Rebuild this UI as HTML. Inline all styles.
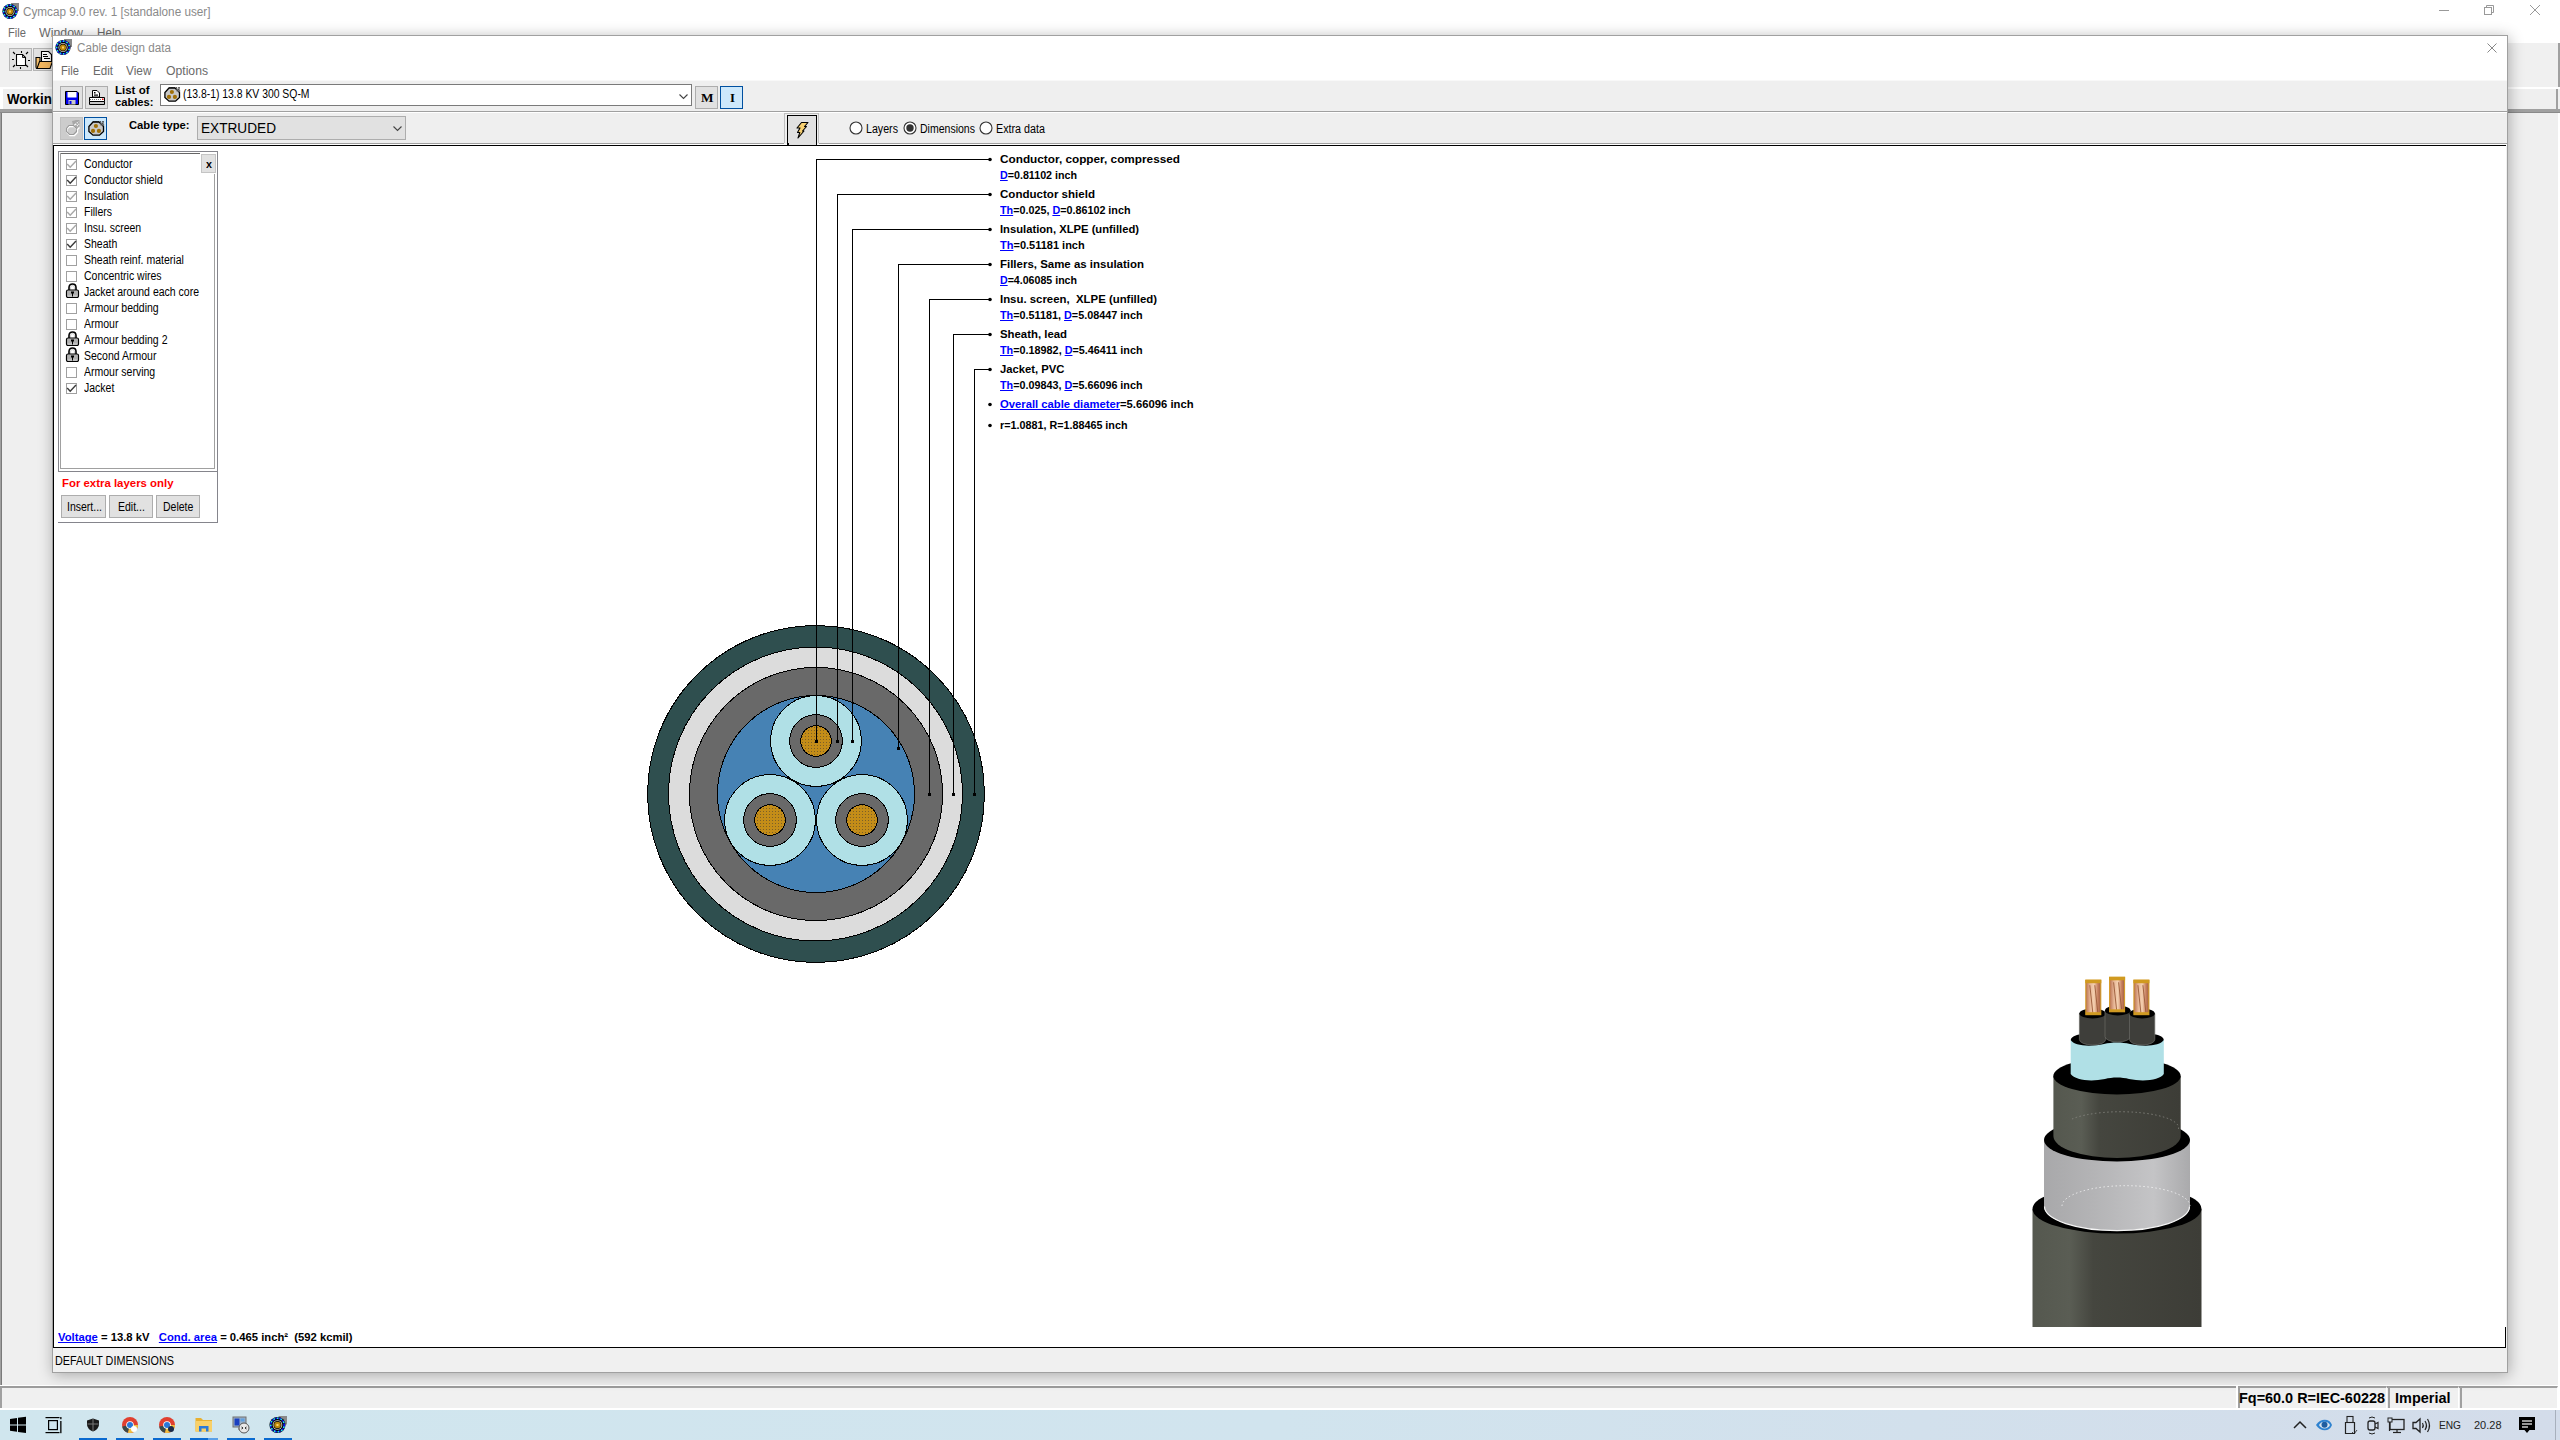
<!DOCTYPE html>
<html><head><meta charset="utf-8"><title>Cymcap</title>
<style>html,body{margin:0;padding:0;width:2560px;height:1440px;overflow:hidden;background:#f0f0f0;font-family:"Liberation Sans",sans-serif;position:relative}
u{text-decoration:underline}</style></head><body>
<div style="position:absolute;left:0px;top:0px;width:2560px;height:43px;background:#fff"></div>
<svg style="position:absolute;left:2px;top:3px" width="17" height="17" viewBox="0 0 17 17">
<rect x="9" y="0" width="8" height="8" fill="#888"/>
<circle cx="8" cy="8.5" r="7.6" fill="#000"/>
<circle cx="8" cy="8.5" r="6.4" fill="none" stroke="#1010f0" stroke-width="1.6" stroke-dasharray="2 1.5"/>
<circle cx="8" cy="8.5" r="6.4" fill="none" stroke="#20e0f0" stroke-width="1.6" stroke-dasharray="1.5 2" stroke-dashoffset="2"/>
<circle cx="8" cy="8.5" r="4.6" fill="#c8c8c8"/>
<circle cx="8" cy="8.5" r="3.7" fill="#000"/>
<circle cx="8" cy="8.5" r="3.1" fill="#b8860b"/>
<rect x="7" y="7.5" width="2" height="2" fill="#ffd060"/>
</svg>
<div style="position:absolute;left:22.8px;top:5.84px;font:normal 12px/12px 'Liberation Sans', sans-serif;color:#8a8a8a;white-space:pre;transform:scaleX(0.9771);transform-origin:0 0;">Cymcap 9.0 rev. 1 [standalone user]</div>
<svg style="position:absolute;left:2430px;top:0" width="130" height="22">
<line x1="9" y1="10.5" x2="19" y2="10.5" stroke="#999" stroke-width="1"/>
<rect x="54.5" y="7.5" width="7" height="7" fill="none" stroke="#999"/>
<path d="M56.5 7.5 V5.5 H63.5 V12.5 H61.5" fill="none" stroke="#999"/>
<line x1="100" y1="5" x2="110" y2="15" stroke="#999"/>
<line x1="110" y1="5" x2="100" y2="15" stroke="#999"/>
</svg>
<div style="position:absolute;left:7.5px;top:26.84px;font:normal 12px/12px 'Liberation Sans', sans-serif;color:#6a6a6a;white-space:pre;transform:scaleX(0.9305);transform-origin:0 0;">File</div>
<div style="position:absolute;left:39px;top:26.84px;font:normal 12px/12px 'Liberation Sans', sans-serif;color:#6a6a6a;white-space:pre;transform:scaleX(1.0307);transform-origin:0 0;">Window</div>
<div style="position:absolute;left:97px;top:26.84px;font:normal 12px/12px 'Liberation Sans', sans-serif;color:#6a6a6a;white-space:pre;transform:scaleX(0.9722);transform-origin:0 0;">Help</div>
<div style="position:absolute;left:0px;top:43px;width:2560px;height:44px;background:#f0f0f0"></div>
<div style="position:absolute;left:9px;top:48px;width:23px;height:23px;background:#e1e1e1;border:1px solid #b4b4b4;box-sizing:border-box"></div>
<svg style="position:absolute;left:9px;top:48px" width="23" height="23">
<path d="M7.5 6.5 H13.5 L16.5 9.5 V17.5 H7.5 Z" fill="#fff" stroke="#000" stroke-width="1.1"/>
<path d="M13.5 6.5 V9.5 H16.5" fill="none" stroke="#000" stroke-width="0.9"/>
<g stroke="#000" stroke-width="1.1"><line x1="12.5" y1="3" x2="12.5" y2="5"/><line x1="11.5" y1="19" x2="11.5" y2="21"/>
<line x1="3" y1="11.5" x2="5" y2="11.5"/><line x1="19" y1="12.5" x2="21" y2="12.5"/>
<line x1="4" y1="4" x2="6" y2="6"/><line x1="19" y1="4" x2="17" y2="6"/>
<line x1="4" y1="19" x2="6" y2="17"/><line x1="19" y1="19" x2="17" y2="17"/></g>
</svg>
<div style="position:absolute;left:33px;top:48px;width:23px;height:23px;background:#e1e1e1;border:1px solid #b4b4b4;box-sizing:border-box"></div>
<svg style="position:absolute;left:33px;top:48px" width="23" height="23">
<path d="M3 9.5 H7 V20.5 H4 Q3 20.5 3 19 Z" fill="#f4c070" stroke="#000" stroke-width="1.1"/>
<path d="M6.5 13.5 H19.5 L17 20.5 H4 Z" fill="#f4b860" stroke="#000" stroke-width="1.1"/>
<path d="M8.5 3.5 H15.5 L18.5 6.5 V13.5 H8.5 Z" fill="#fff" stroke="#000" stroke-width="1.1"/>
<line x1="10" y1="6.5" x2="14" y2="6.5" stroke="#000"/><line x1="10" y1="8.5" x2="15" y2="8.5" stroke="#000"/><line x1="11" y1="10.5" x2="17" y2="10.5" stroke="#000"/>
</svg>
<div style="position:absolute;left:0px;top:87px;width:2560px;height:2px;background:#fff"></div>
<div style="position:absolute;left:0px;top:89px;width:3px;height:20px;background:#fff"></div>
<div style="position:absolute;left:3px;top:89px;width:2554px;height:20px;background:#efefef"></div>
<div style="position:absolute;left:2556px;top:89px;width:2px;height:20px;background:#a0a0a0"></div>
<div style="position:absolute;left:2558px;top:43px;width:2px;height:44px;background:#a0a0a0"></div>
<div style="position:absolute;left:7px;top:92.05px;font:bold 14px/14px 'Liberation Sans', sans-serif;color:#000;white-space:pre;transform:scaleX(0.9500);transform-origin:0 0;">Working</div>
<div style="position:absolute;left:0px;top:109px;width:2560px;height:4px;background:#a0a0a0"></div>
<div style="position:absolute;left:0px;top:112px;width:2560px;height:1px;background:#8a8a8a"></div>
<div style="position:absolute;left:0px;top:113px;width:2560px;height:1272px;background:#efefef"></div>
<div style="position:absolute;left:0px;top:113px;width:2px;height:1272px;background:#a0a0a0"></div>
<div style="position:absolute;left:1px;top:113px;width:1px;height:1272px;background:#7a7a7a"></div>
<div style="position:absolute;left:2558px;top:113px;width:2px;height:1272px;background:#fff"></div>
<div style="position:absolute;left:0px;top:1385px;width:2560px;height:1px;background:#fff"></div>
<div style="position:absolute;left:0px;top:1386px;width:2560px;height:2px;background:#9c9c9c"></div>
<div style="position:absolute;left:0px;top:1388px;width:2560px;height:20px;background:#f0f0f0"></div>
<div style="position:absolute;left:0px;top:1388px;width:2px;height:20px;background:#a0a0a0"></div>
<div style="position:absolute;left:0px;top:1408px;width:2560px;height:2px;background:#fff"></div>
<div style="position:absolute;left:2558px;top:1386px;width:2px;height:24px;background:#fff"></div>
<div style="position:absolute;left:2238px;top:1386px;width:149px;height:22px;box-sizing:border-box;border-top:2px solid #a0a0a0;border-left:2px solid #a0a0a0;border-right:1px solid #fff;"></div>
<div style="position:absolute;left:2388px;top:1386px;width:71px;height:22px;box-sizing:border-box;border-top:2px solid #a0a0a0;border-left:2px solid #a0a0a0;border-right:1px solid #fff;"></div>
<div style="position:absolute;left:2460px;top:1386px;width:98px;height:22px;box-sizing:border-box;border-top:2px solid #a0a0a0;border-left:2px solid #a0a0a0;border-right:1px solid #fff;"></div>
<div style="position:absolute;left:2236px;top:1386px;width:2px;height:22px;background:#fff"></div>
<div style="position:absolute;left:2239px;top:1390.65px;font:bold 14px/14px 'Liberation Sans', sans-serif;color:#000;white-space:pre;transform:scaleX(1.0308);transform-origin:0 0;">Fq=60.0 R=IEC-60228</div>
<div style="position:absolute;left:2395px;top:1390.65px;font:bold 14px/14px 'Liberation Sans', sans-serif;color:#000;white-space:pre;transform:scaleX(1.0335);transform-origin:0 0;">Imperial</div>
<div style="position:absolute;left:0px;top:1410px;width:2560px;height:30px;background:linear-gradient(90deg,#d0e6ee 0%,#d1e4ee 50%,#d3dcea 100%)"></div>
<svg style="position:absolute;left:9px;top:1416px" width="18" height="18">
<path d="M1 3 L8 2 V8.4 H1 Z M9 1.8 L17 0.8 V8.4 H9 Z M1 9.4 H8 V15.8 L1 14.8 Z M9 9.4 H17 V17 L9 16 Z" fill="#000"/></svg>
<svg style="position:absolute;left:45px;top:1416px" width="18" height="18">
<rect x="3.6" y="4.6" width="8.8" height="9" fill="none" stroke="#000" stroke-width="1.2"/>
<rect x="0.5" y="1" width="14" height="1.2" fill="#000"/><rect x="0.5" y="16" width="14" height="1.2" fill="#000"/>
<rect x="15.2" y="1" width="1.3" height="2.2" fill="#000"/><rect x="15.2" y="5" width="1.3" height="12.2" fill="#000"/>
</svg>
<svg style="position:absolute;left:86px;top:1418px" width="14" height="14">
<path d="M7 0.5 L13 2.5 V6 C13 10 10 12.5 7 13.5 C4 12.5 1 10 1 6 V2.5 Z" fill="#1a1a1a"/>
<line x1="7" y1="1" x2="7" y2="13" stroke="#777" stroke-width="1"/><line x1="1.5" y1="6" x2="12.5" y2="6" stroke="#777" stroke-width="1"/></svg>
<svg style="position:absolute;left:121px;top:1416px" width="18" height="18">
<circle cx="9" cy="9" r="8" fill="#e04030"/>
<path d="M9 9 L1.2 10.5 A8 8 0 0 0 7 16.8 Z" fill="#3a4a48"/>
<path d="M9 9 L7 16.8 A8 8 0 0 0 17 9 L9 9 Z" fill="#f0c040"/>
<circle cx="9" cy="9" r="3.8" fill="#fff"/><circle cx="9" cy="9" r="3" fill="#2a78d8"/>
<circle cx="13" cy="13" r="3" fill="#fff"/></svg>
<svg style="position:absolute;left:158px;top:1416px" width="18" height="18">
<circle cx="9" cy="9" r="8" fill="#e04030"/>
<path d="M9 9 L1.2 10.5 A8 8 0 0 0 7 16.8 Z" fill="#3a4a48"/>
<path d="M9 9 L7 16.8 A8 8 0 0 0 17 9 L9 9 Z" fill="#f0c040"/>
<circle cx="9" cy="9" r="3.8" fill="#fff"/><circle cx="9" cy="9" r="3" fill="#2a78d8"/>
<circle cx="13" cy="13" r="3" fill="#1a2a4a"/></svg>
<svg style="position:absolute;left:195px;top:1417px" width="18" height="16">
<path d="M0.5 1 H6 L8 3 H17 V14.5 H0.5 Z" fill="#e8b030"/>
<rect x="0.5" y="4" width="16.5" height="10.5" fill="#f8d068"/>
<path d="M4 14.5 V9 H13.5 V14.5 H11 V11.5 H6.5 V14.5 Z" fill="#2a7ad8"/></svg>
<svg style="position:absolute;left:232px;top:1416px" width="18" height="18">
<rect x="1" y="1" width="13" height="10" fill="#9ab0c8" stroke="#707070"/>
<rect x="2.5" y="2.5" width="5" height="7" fill="#1a40c0"/><rect x="8.5" y="2.5" width="4" height="3" fill="#60a0e0"/>
<rect x="6" y="11" width="4" height="3" fill="#aaa"/>
<circle cx="12" cy="12" r="5" fill="#e8e8e8" stroke="#555"/>
<path d="M9.5 11 L11 12 L9.5 13 M14.5 11 L13 12 L14.5 13" stroke="#222" fill="none"/></svg>
<svg style="position:absolute;left:269px;top:1416px" width="18" height="18" viewBox="0 0 17 17">
<rect x="9" y="0" width="8" height="8" fill="#888"/>
<circle cx="8" cy="8.5" r="7.6" fill="#000"/>
<circle cx="8" cy="8.5" r="6.4" fill="none" stroke="#1010f0" stroke-width="1.6" stroke-dasharray="2 1.5"/>
<circle cx="8" cy="8.5" r="6.4" fill="none" stroke="#20e0f0" stroke-width="1.6" stroke-dasharray="1.5 2" stroke-dashoffset="2"/>
<circle cx="8" cy="8.5" r="4.6" fill="#c8c8c8"/>
<circle cx="8" cy="8.5" r="3.7" fill="#000"/>
<circle cx="8" cy="8.5" r="3.1" fill="#b8860b"/>
<rect x="7" y="7.5" width="2" height="2" fill="#ffd060"/>
</svg>
<div style="position:absolute;left:79px;top:1438px;width:28px;height:2px;background:#0a6ad0"></div>
<div style="position:absolute;left:116px;top:1438px;width:28px;height:2px;background:#0a6ad0"></div>
<div style="position:absolute;left:153px;top:1438px;width:28px;height:2px;background:#0a6ad0"></div>
<div style="position:absolute;left:190px;top:1438px;width:28px;height:2px;background:#0a6ad0"></div>
<div style="position:absolute;left:227px;top:1438px;width:28px;height:2px;background:#0a6ad0"></div>
<div style="position:absolute;left:264px;top:1438px;width:28px;height:2px;background:#0a6ad0"></div>
<div style="position:absolute;left:208px;top:1438px;width:10px;height:2px;background:#5aa0e8"></div>
<svg style="position:absolute;left:2290px;top:1414px" width="270" height="24">
<path d="M4 14 L10 8 L16 14" fill="none" stroke="#222" stroke-width="1.5"/>
<path d="M26 11 C30 4 40 4 42 11 C40 18 30 18 26 11 Z" fill="#2e82d0"/>
<path d="M29 11 C31 6.5 38 6.5 40 11 C38 15.5 31 15.5 29 11 Z" fill="#d9e4ee"/>
<circle cx="34.5" cy="10.8" r="3" fill="#1f5da0"/>
<rect x="57" y="2.5" width="6" height="6" fill="none" stroke="#222" stroke-width="1.1"/>
<path d="M55.5 8.5 H64.5 V19.5 H55.5 Z" fill="none" stroke="#222" stroke-width="1.2"/>
<path d="M62 18 L64 20 L67 16" fill="none" stroke="#222" stroke-width="0.8"/>
<rect x="78" y="7" width="7" height="9" rx="2" fill="none" stroke="#222" stroke-width="1.3"/>
<path d="M85 10 L88 8.5 V14.5 L85 13" fill="none" stroke="#222" stroke-width="1.2"/>
<path d="M79 4 Q82 2 85 4 M79 19 Q82 21 85 19" fill="none" stroke="#222" stroke-width="1"/>
<rect x="100" y="5.5" width="14" height="10" fill="none" stroke="#222" stroke-width="1.3"/>
<rect x="98" y="4" width="4" height="4" fill="#d5e0ec" stroke="#222" stroke-width="1"/>
<line x1="99.5" y1="8" x2="99.5" y2="17" stroke="#222" stroke-width="1.2"/>
<line x1="107" y1="15.5" x2="107" y2="18.5" stroke="#222" stroke-width="1.2"/><line x1="103" y1="18.5" x2="111" y2="18.5" stroke="#222" stroke-width="1.2"/>
<path d="M123 8.5 H126 L130 5 V18 L126 14.5 H123 Z" fill="none" stroke="#222" stroke-width="1.3"/>
<path d="M132.5 9 Q134 11.5 132.5 14 M135 7 Q138 11.5 135 16 M137.5 5 Q141.5 11.5 137.5 18" fill="none" stroke="#222" stroke-width="1.2"/>
<path d="M229 3 H245 V16 H239.5 L237 19 L234.5 16 H229 Z" fill="#000"/>
<line x1="232" y1="7" x2="242" y2="7" stroke="#fff" stroke-width="1.2"/><line x1="232" y1="10" x2="242" y2="10" stroke="#fff" stroke-width="1.2"/><line x1="232" y1="13" x2="238" y2="13" stroke="#fff" stroke-width="1.2"/>
</svg>
<div style="position:absolute;left:2438.5px;top:1419.57px;font:normal 11.5px/11.5px 'Liberation Sans', sans-serif;color:#222;white-space:pre;transform:scaleX(0.8828);transform-origin:0 0;">ENG</div>
<div style="position:absolute;left:2473.5px;top:1419.57px;font:normal 11.5px/11.5px 'Liberation Sans', sans-serif;color:#222;white-space:pre;transform:scaleX(0.9555);transform-origin:0 0;">20.28</div>
<div style="position:absolute;left:2555px;top:1410px;width:1px;height:30px;background:#a8b0bc"></div>
<div style="position:absolute;left:52px;top:35px;width:2456px;height:1338px;box-sizing:border-box;border:1px solid #a0a0a0;background:#f0f0f0;box-shadow:1px 2px 14px rgba(0,0,0,0.30)"></div>
<div style="position:absolute;left:53px;top:36px;width:2454px;height:45px;background:#fff"></div>
<svg style="position:absolute;left:55px;top:39px" width="17" height="17" viewBox="0 0 17 17">
<rect x="9" y="0" width="8" height="8" fill="#888"/>
<circle cx="8" cy="8.5" r="7.6" fill="#000"/>
<circle cx="8" cy="8.5" r="6.4" fill="none" stroke="#1010f0" stroke-width="1.6" stroke-dasharray="2 1.5"/>
<circle cx="8" cy="8.5" r="6.4" fill="none" stroke="#20e0f0" stroke-width="1.6" stroke-dasharray="1.5 2" stroke-dashoffset="2"/>
<circle cx="8" cy="8.5" r="4.6" fill="#c8c8c8"/>
<circle cx="8" cy="8.5" r="3.7" fill="#000"/>
<circle cx="8" cy="8.5" r="3.1" fill="#b8860b"/>
<rect x="7" y="7.5" width="2" height="2" fill="#ffd060"/>
</svg>
<div style="position:absolute;left:77px;top:41.84px;font:normal 12px/12px 'Liberation Sans', sans-serif;color:#8a8a8a;white-space:pre;transform:scaleX(0.9716);transform-origin:0 0;">Cable design data</div>
<svg style="position:absolute;left:2480px;top:38px" width="24" height="20">
<line x1="7.5" y1="5.5" x2="16.5" y2="14.5" stroke="#888" stroke-width="1"/>
<line x1="16.5" y1="5.5" x2="7.5" y2="14.5" stroke="#888" stroke-width="1"/></svg>
<div style="position:absolute;left:60.5px;top:64.84px;font:normal 12px/12px 'Liberation Sans', sans-serif;color:#6a6a6a;white-space:pre;transform:scaleX(0.9305);transform-origin:0 0;">File</div>
<div style="position:absolute;left:92.5px;top:64.84px;font:normal 12px/12px 'Liberation Sans', sans-serif;color:#6a6a6a;white-space:pre;transform:scaleX(0.9668);transform-origin:0 0;">Edit</div>
<div style="position:absolute;left:126px;top:64.84px;font:normal 12px/12px 'Liberation Sans', sans-serif;color:#6a6a6a;white-space:pre;transform:scaleX(0.9885);transform-origin:0 0;">View</div>
<div style="position:absolute;left:165.5px;top:64.84px;font:normal 12px/12px 'Liberation Sans', sans-serif;color:#6a6a6a;white-space:pre;transform:scaleX(1.0155);transform-origin:0 0;">Options</div>
<div style="position:absolute;left:53px;top:80px;width:2454px;height:1px;background:#f8f8f8"></div>
<div style="position:absolute;left:53px;top:81px;width:2454px;height:30px;background:#efefef"></div>
<div style="position:absolute;left:60px;top:86px;width:23px;height:23px;box-sizing:border-box;border:1px solid #adadad;background:#e1e1e1"></div>
<svg style="position:absolute;left:60px;top:86px" width="23" height="23">
<path d="M5.5 5.5 H17 L18.5 7 V18.5 H5.5 Z" fill="#0000f0" stroke="#000"/>
<rect x="7.5" y="6" width="9" height="5.5" fill="#fff"/>
<rect x="8.5" y="14" width="7" height="4.5" fill="#c8c8c8"/><rect x="9.5" y="15" width="2" height="3" fill="#0000f0"/>
</svg>
<div style="position:absolute;left:85px;top:86px;width:23px;height:23px;box-sizing:border-box;border:1px solid #adadad;background:#e1e1e1"></div>
<svg style="position:absolute;left:85px;top:86px" width="23" height="23">
<path d="M7.5 4.5 H12 L14.5 7 V11 H7.5 Z" fill="#fff" stroke="#000"/>
<rect x="9" y="6" width="1.5" height="1.5" fill="#000"/><rect x="9" y="8.5" width="4" height="1.2" fill="#000"/>
<path d="M4.5 11.5 H19.5 V15.5 H4.5 Z" fill="#fff" stroke="#000"/>
<path d="M5 13.5 H19" stroke="#777" stroke-dasharray="1 1"/>
<rect x="17" y="12.5" width="1.5" height="1.5" fill="#e00"/>
<path d="M4.5 15.5 H19.5 V18.5 H4.5 Z" fill="#c8c8c8" stroke="#000"/>
</svg>
<div style="position:absolute;left:115.4px;top:85.09px;font:bold 11px/11px 'Liberation Sans', sans-serif;color:#000;white-space:pre;transform:scaleX(1.0455);transform-origin:0 0;">List of</div>
<div style="position:absolute;left:115.4px;top:96.99px;font:bold 11px/11px 'Liberation Sans', sans-serif;color:#000;white-space:pre;transform:scaleX(1.0152);transform-origin:0 0;">cables:</div>
<div style="position:absolute;left:160px;top:84px;width:532px;height:22px;box-sizing:border-box;border:1px solid #7a7a7a;background:#fff"></div>
<svg style="position:absolute;left:164px;top:87px" width="17" height="16" viewBox="0 0 17 16">
<path d="M5 1 H11 L15.5 5.5 V10.5 L11.5 14.2 H5 L0.9 10.5 V5.5 Z" fill="#c8c8c8" stroke="#000" stroke-width="1.3"/>
<path d="M5.5 0.8 L6.5 -0.2 L7.5 0.8 M8.5 0.8 L9.5 -0.2 L10.5 0.8" fill="none" stroke="#000" stroke-width="1"/>
<path d="M12 1.5 L13 0.5 M14.5 1 L15.5 0 M13.5 3.5 L15.5 1.5 M15 4.5 L16 3.5" stroke="#222" stroke-width="1.1"/>
<rect x="12" y="1" width="4" height="4" fill="#888" opacity="0.45"/>
<circle cx="7.9" cy="5" r="2.1" fill="#a07008"/>
<circle cx="5" cy="9.9" r="2.1" fill="#a07008"/>
<circle cx="10.9" cy="9.9" r="2.1" fill="#a07008"/>
</svg>
<div style="position:absolute;left:183.4px;top:88.14px;font:normal 12px/12px 'Liberation Sans', sans-serif;color:#000;white-space:pre;transform:scaleX(0.8660);transform-origin:0 0;">(13.8-1) 13.8 KV 300 SQ-M</div>
<svg style="position:absolute;left:679px;top:93.5px" width="9" height="6"><path d="M0.5 0.5 L4.5 4.5 L8.5 0.5" fill="none" stroke="#444" stroke-width="1.1"/></svg>
<div style="position:absolute;left:695px;top:86px;width:23px;height:23px;box-sizing:border-box;border:1px solid #adadad;background:#e1e1e1"></div>
<div style="position:absolute;left:700.6px;top:92.42px;font:bold 12.5px/12.5px 'Liberation Serif', serif;color:#000;white-space:pre;transform:scaleX(1.0582);transform-origin:0 0;">M</div>
<div style="position:absolute;left:720px;top:86px;width:23px;height:23px;box-sizing:border-box;border:1px solid #0050a0;background:#cde8fb"></div>
<div style="position:absolute;left:729.6px;top:92.42px;font:bold 12.5px/12.5px 'Liberation Serif', serif;color:#000;white-space:pre;transform:scaleX(1.0256);transform-origin:0 0;">I</div>
<div style="position:absolute;left:53px;top:111px;width:2454px;height:1px;background:#a0a0a0"></div>
<div style="position:absolute;left:53px;top:112px;width:2454px;height:1px;background:#fff"></div>
<div style="position:absolute;left:53px;top:113px;width:2454px;height:30px;background:#efefef"></div>
<div style="position:absolute;left:60px;top:117px;width:23px;height:23px;box-sizing:border-box;border:1px solid #c0c0c0;background:#cccccc"></div>
<svg style="position:absolute;left:60px;top:117px" width="23" height="23">
<path d="M12 4 L14.5 3.5 L16 3 L19.5 3 V9 L17 12 L15 10 L13 8 Z" fill="#a8a8a8"/>
<path d="M15.5 7.5 L18.5 4.5 M17 9 L19 7" stroke="#fff" stroke-width="1.2" stroke-dasharray="1 1"/>
<path d="M9.5 9.5 H14 L17.5 13 V15.5 L14.5 18.5 H10 L7 15.5 V12 Z" fill="none" stroke="#fff" stroke-width="1.3"/>
<path d="M9 8.5 H13.5 L16.5 11.5 V14.5 L13.5 17.5 H9.5 L6.5 14.5 V11.5 Z" fill="none" stroke="#9a9a9a" stroke-width="1.1"/>
<path d="M14 8 L16 7.5 M17 13 L19.5 10.5" stroke="#fff" stroke-width="1.2"/>
</svg>
<div style="position:absolute;left:84px;top:117px;width:23px;height:23px;box-sizing:border-box;border:1px solid #0050a0;background:#cde8fb"></div>
<svg style="position:absolute;left:88px;top:121px" width="17" height="16" viewBox="0 0 17 16">
<path d="M5 1 H11 L15.5 5.5 V10.5 L11.5 14.2 H5 L0.9 10.5 V5.5 Z" fill="#c8c8c8" stroke="#000" stroke-width="1.3"/>
<path d="M5.5 0.8 L6.5 -0.2 L7.5 0.8 M8.5 0.8 L9.5 -0.2 L10.5 0.8" fill="none" stroke="#000" stroke-width="1"/>
<path d="M12 1.5 L13 0.5 M14.5 1 L15.5 0 M13.5 3.5 L15.5 1.5 M15 4.5 L16 3.5" stroke="#222" stroke-width="1.1"/>
<rect x="12" y="1" width="4" height="4" fill="#888" opacity="0.45"/>
<circle cx="7.9" cy="5" r="2.1" fill="#a07008"/>
<circle cx="5" cy="9.9" r="2.1" fill="#a07008"/>
<circle cx="10.9" cy="9.9" r="2.1" fill="#a07008"/>
</svg>
<div style="position:absolute;left:129.2px;top:120.29px;font:bold 11px/11px 'Liberation Sans', sans-serif;color:#000;white-space:pre;transform:scaleX(1.0203);transform-origin:0 0;">Cable type:</div>
<div style="position:absolute;left:197px;top:116px;width:209px;height:24px;box-sizing:border-box;border:1px solid #adadad;background:#e1e1e1"></div>
<div style="position:absolute;left:200.8px;top:121.15px;font:normal 14px/14px 'Liberation Sans', sans-serif;color:#000;white-space:pre;transform:scaleX(0.9738);transform-origin:0 0;">EXTRUDED</div>
<svg style="position:absolute;left:392.5px;top:126px" width="9" height="6"><path d="M0.5 0.5 L4.5 4.5 L8.5 0.5" fill="none" stroke="#444" stroke-width="1.1"/></svg>
<div style="position:absolute;left:784px;top:113px;width:35px;height:31px;box-sizing:border-box;border:1px solid #c0c0c0;border-bottom:none;background:#efefef"></div>
<div style="position:absolute;left:787px;top:115px;width:30px;height:29px;box-sizing:border-box;border:1.5px solid #000;border-bottom:none;background:#e1e1e1"></div>
<svg style="position:absolute;left:787px;top:115px" width="30" height="29">
<path d="M14.5 7.5 H21 L17.5 11.5 H19.5 L15.5 16 H17 L11 23 L12.8 17.5 H10.5 L13 13 H10 Z" fill="#f8d070" stroke="#000" stroke-width="1.1" stroke-linejoin="round"/></svg>
<svg style="position:absolute;left:849.3px;top:121.4px" width="14" height="14"><circle cx="7" cy="7" r="6" fill="#fff" stroke="#333" stroke-width="1.1"/></svg>
<div style="position:absolute;left:865.8px;top:122.84px;font:normal 12px/12px 'Liberation Sans', sans-serif;color:#000;white-space:pre;transform:scaleX(0.8881);transform-origin:0 0;">Layers</div>
<svg style="position:absolute;left:903.4px;top:121.4px" width="14" height="14"><circle cx="7" cy="7" r="6" fill="#fff" stroke="#333" stroke-width="1.1"/><circle cx="7" cy="7" r="3.7" fill="#333"/></svg>
<div style="position:absolute;left:920.0px;top:122.84px;font:normal 12px/12px 'Liberation Sans', sans-serif;color:#000;white-space:pre;transform:scaleX(0.8771);transform-origin:0 0;">Dimensions</div>
<svg style="position:absolute;left:979.2px;top:121.4px" width="14" height="14"><circle cx="7" cy="7" r="6" fill="#fff" stroke="#333" stroke-width="1.1"/></svg>
<div style="position:absolute;left:996.0px;top:122.84px;font:normal 12px/12px 'Liberation Sans', sans-serif;color:#000;white-space:pre;transform:scaleX(0.8957);transform-origin:0 0;">Extra data</div>
<div style="position:absolute;left:53px;top:143px;width:2454px;height:1px;background:#a0a0a0"></div>
<div style="position:absolute;left:53px;top:144px;width:2454px;height:1px;background:#fff"></div>
<div style="position:absolute;left:784px;top:143px;width:35px;height:1px;background:#efefef"></div>
<div style="position:absolute;left:787px;top:143px;width:1.5px;height:2px;background:#000"></div>
<div style="position:absolute;left:815.5px;top:143px;width:1.5px;height:2px;background:#000"></div>
<div style="position:absolute;left:788.5px;top:143px;width:27px;height:2px;background:#e1e1e1"></div>
<div style="position:absolute;left:53px;top:145px;width:2453px;height:1203px;background:#fff"></div>
<div style="position:absolute;left:53px;top:145px;width:2453px;height:1px;background:#000"></div>
<div style="position:absolute;left:53px;top:145px;width:1px;height:1203px;background:#000"></div>
<div style="position:absolute;left:53px;top:1347px;width:2453px;height:1px;background:#000"></div>
<div style="position:absolute;left:2505px;top:1327px;width:1px;height:21px;background:#000"></div>
<div style="position:absolute;left:55.3px;top:1354.54px;font:normal 12px/12px 'Liberation Sans', sans-serif;color:#000;white-space:pre;transform:scaleX(0.8998);transform-origin:0 0;">DEFAULT DIMENSIONS</div>
<div style="position:absolute;left:58px;top:151px;width:160px;height:1px;background:#85858c"></div>
<div style="position:absolute;left:58px;top:151px;width:1px;height:321px;background:#85858c"></div>
<div style="position:absolute;left:217px;top:151px;width:1px;height:372px;background:#85858c"></div>
<div style="position:absolute;left:58px;top:471px;width:160px;height:1px;background:#85858c"></div>
<div style="position:absolute;left:58px;top:522px;width:160px;height:1px;background:#85858c"></div>
<div style="position:absolute;left:60px;top:153px;width:140px;height:1px;background:#666"></div>
<div style="position:absolute;left:60px;top:153px;width:1px;height:316px;background:#a0a0a0"></div>
<div style="position:absolute;left:60px;top:468px;width:155px;height:1px;background:#a0a0a0"></div>
<div style="position:absolute;left:214px;top:174px;width:1px;height:295px;background:#a0a0a0"></div>
<div style="position:absolute;left:201px;top:154px;width:15px;height:19px;box-sizing:border-box;border:1px solid #c4c4c4;background:#e1e1e1"></div>
<div style="position:absolute;left:206px;top:158.69px;font:bold 11px/11px 'Liberation Sans', sans-serif;color:#000;white-space:pre;transform:scaleX(0.9796);transform-origin:0 0;">x</div>
<div style="position:absolute;left:66px;top:159px;width:11px;height:11px;box-sizing:border-box;border:1px solid #a0a0a0;background:#fff"></div>
<svg style="position:absolute;left:66px;top:159px" width="11" height="11"><path d="M1.2 5 L4.2 8.2 L10 2" fill="none" stroke="#a8a8a8" stroke-width="1.4"/></svg>
<div style="position:absolute;left:83.8px;top:157.64px;font:normal 12px/12px 'Liberation Sans', sans-serif;color:#000;white-space:pre;transform:scaleX(0.8750);transform-origin:0 0;">Conductor</div>
<div style="position:absolute;left:66px;top:175px;width:11px;height:11px;box-sizing:border-box;border:1px solid #a0a0a0;background:#fff"></div>
<svg style="position:absolute;left:66px;top:175px" width="11" height="11"><path d="M1.2 5 L4.2 8.2 L10 2" fill="none" stroke="#3a3a3a" stroke-width="1.4"/></svg>
<div style="position:absolute;left:83.8px;top:173.64px;font:normal 12px/12px 'Liberation Sans', sans-serif;color:#000;white-space:pre;transform:scaleX(0.8750);transform-origin:0 0;">Conductor shield</div>
<div style="position:absolute;left:66px;top:191px;width:11px;height:11px;box-sizing:border-box;border:1px solid #a0a0a0;background:#fff"></div>
<svg style="position:absolute;left:66px;top:191px" width="11" height="11"><path d="M1.2 5 L4.2 8.2 L10 2" fill="none" stroke="#a8a8a8" stroke-width="1.4"/></svg>
<div style="position:absolute;left:83.8px;top:189.64px;font:normal 12px/12px 'Liberation Sans', sans-serif;color:#000;white-space:pre;transform:scaleX(0.8750);transform-origin:0 0;">Insulation</div>
<div style="position:absolute;left:66px;top:207px;width:11px;height:11px;box-sizing:border-box;border:1px solid #a0a0a0;background:#fff"></div>
<svg style="position:absolute;left:66px;top:207px" width="11" height="11"><path d="M1.2 5 L4.2 8.2 L10 2" fill="none" stroke="#a8a8a8" stroke-width="1.4"/></svg>
<div style="position:absolute;left:83.8px;top:205.64px;font:normal 12px/12px 'Liberation Sans', sans-serif;color:#000;white-space:pre;transform:scaleX(0.8750);transform-origin:0 0;">Fillers</div>
<div style="position:absolute;left:66px;top:223px;width:11px;height:11px;box-sizing:border-box;border:1px solid #a0a0a0;background:#fff"></div>
<svg style="position:absolute;left:66px;top:223px" width="11" height="11"><path d="M1.2 5 L4.2 8.2 L10 2" fill="none" stroke="#a8a8a8" stroke-width="1.4"/></svg>
<div style="position:absolute;left:83.8px;top:221.64px;font:normal 12px/12px 'Liberation Sans', sans-serif;color:#000;white-space:pre;transform:scaleX(0.8750);transform-origin:0 0;">Insu. screen</div>
<div style="position:absolute;left:66px;top:239px;width:11px;height:11px;box-sizing:border-box;border:1px solid #a0a0a0;background:#fff"></div>
<svg style="position:absolute;left:66px;top:239px" width="11" height="11"><path d="M1.2 5 L4.2 8.2 L10 2" fill="none" stroke="#3a3a3a" stroke-width="1.4"/></svg>
<div style="position:absolute;left:83.8px;top:237.64px;font:normal 12px/12px 'Liberation Sans', sans-serif;color:#000;white-space:pre;transform:scaleX(0.8750);transform-origin:0 0;">Sheath</div>
<div style="position:absolute;left:66px;top:255px;width:11px;height:11px;box-sizing:border-box;border:1px solid #a0a0a0;background:#fff"></div>
<div style="position:absolute;left:83.8px;top:253.64px;font:normal 12px/12px 'Liberation Sans', sans-serif;color:#000;white-space:pre;transform:scaleX(0.8750);transform-origin:0 0;">Sheath reinf. material</div>
<div style="position:absolute;left:66px;top:271px;width:11px;height:11px;box-sizing:border-box;border:1px solid #a0a0a0;background:#fff"></div>
<div style="position:absolute;left:83.8px;top:269.64px;font:normal 12px/12px 'Liberation Sans', sans-serif;color:#000;white-space:pre;transform:scaleX(0.8750);transform-origin:0 0;">Concentric wires</div>
<svg style="position:absolute;left:65px;top:283px" width="15" height="15">
<path d="M4 7 V4.5 C4 2 5.5 1 7.5 1 C9.5 1 11 2 11 4.5 V7" fill="none" stroke="#000" stroke-width="1.6"/>
<path d="M5.6 7 V4.8 C5.6 3.3 6.4 2.6 7.5 2.6 C8.6 2.6 9.4 3.3 9.4 4.8 V7" fill="none" stroke="#bbb" stroke-width="0.8"/>
<rect x="1.5" y="7" width="12" height="7.5" rx="1.5" fill="#c0c0c0" stroke="#000" stroke-width="1.2"/>
<path d="M2.5 9 H12.5 M2.5 11 H12.5" stroke="#888" stroke-width="0.6"/>
<path d="M6 8.5 H9 V10 L8 11 V13.5 H7 V11 L6 10 Z" fill="#000"/></svg>
<div style="position:absolute;left:83.8px;top:285.64px;font:normal 12px/12px 'Liberation Sans', sans-serif;color:#000;white-space:pre;transform:scaleX(0.8750);transform-origin:0 0;">Jacket around each core</div>
<div style="position:absolute;left:66px;top:303px;width:11px;height:11px;box-sizing:border-box;border:1px solid #a0a0a0;background:#fff"></div>
<div style="position:absolute;left:83.8px;top:301.64px;font:normal 12px/12px 'Liberation Sans', sans-serif;color:#000;white-space:pre;transform:scaleX(0.8750);transform-origin:0 0;">Armour bedding</div>
<div style="position:absolute;left:66px;top:319px;width:11px;height:11px;box-sizing:border-box;border:1px solid #a0a0a0;background:#fff"></div>
<div style="position:absolute;left:83.8px;top:317.64px;font:normal 12px/12px 'Liberation Sans', sans-serif;color:#000;white-space:pre;transform:scaleX(0.8750);transform-origin:0 0;">Armour</div>
<svg style="position:absolute;left:65px;top:331px" width="15" height="15">
<path d="M4 7 V4.5 C4 2 5.5 1 7.5 1 C9.5 1 11 2 11 4.5 V7" fill="none" stroke="#000" stroke-width="1.6"/>
<path d="M5.6 7 V4.8 C5.6 3.3 6.4 2.6 7.5 2.6 C8.6 2.6 9.4 3.3 9.4 4.8 V7" fill="none" stroke="#bbb" stroke-width="0.8"/>
<rect x="1.5" y="7" width="12" height="7.5" rx="1.5" fill="#c0c0c0" stroke="#000" stroke-width="1.2"/>
<path d="M2.5 9 H12.5 M2.5 11 H12.5" stroke="#888" stroke-width="0.6"/>
<path d="M6 8.5 H9 V10 L8 11 V13.5 H7 V11 L6 10 Z" fill="#000"/></svg>
<div style="position:absolute;left:83.8px;top:333.64px;font:normal 12px/12px 'Liberation Sans', sans-serif;color:#000;white-space:pre;transform:scaleX(0.8750);transform-origin:0 0;">Armour bedding 2</div>
<svg style="position:absolute;left:65px;top:347px" width="15" height="15">
<path d="M4 7 V4.5 C4 2 5.5 1 7.5 1 C9.5 1 11 2 11 4.5 V7" fill="none" stroke="#000" stroke-width="1.6"/>
<path d="M5.6 7 V4.8 C5.6 3.3 6.4 2.6 7.5 2.6 C8.6 2.6 9.4 3.3 9.4 4.8 V7" fill="none" stroke="#bbb" stroke-width="0.8"/>
<rect x="1.5" y="7" width="12" height="7.5" rx="1.5" fill="#c0c0c0" stroke="#000" stroke-width="1.2"/>
<path d="M2.5 9 H12.5 M2.5 11 H12.5" stroke="#888" stroke-width="0.6"/>
<path d="M6 8.5 H9 V10 L8 11 V13.5 H7 V11 L6 10 Z" fill="#000"/></svg>
<div style="position:absolute;left:83.8px;top:349.64px;font:normal 12px/12px 'Liberation Sans', sans-serif;color:#000;white-space:pre;transform:scaleX(0.8750);transform-origin:0 0;">Second Armour</div>
<div style="position:absolute;left:66px;top:367px;width:11px;height:11px;box-sizing:border-box;border:1px solid #a0a0a0;background:#fff"></div>
<div style="position:absolute;left:83.8px;top:365.64px;font:normal 12px/12px 'Liberation Sans', sans-serif;color:#000;white-space:pre;transform:scaleX(0.8750);transform-origin:0 0;">Armour serving</div>
<div style="position:absolute;left:66px;top:383px;width:11px;height:11px;box-sizing:border-box;border:1px solid #a0a0a0;background:#fff"></div>
<svg style="position:absolute;left:66px;top:383px" width="11" height="11"><path d="M1.2 5 L4.2 8.2 L10 2" fill="none" stroke="#3a3a3a" stroke-width="1.4"/></svg>
<div style="position:absolute;left:83.8px;top:381.64px;font:normal 12px/12px 'Liberation Sans', sans-serif;color:#000;white-space:pre;transform:scaleX(0.8750);transform-origin:0 0;">Jacket</div>
<div style="position:absolute;left:62px;top:478.29px;font:bold 11px/11px 'Liberation Sans', sans-serif;color:#ff0000;white-space:pre;transform:scaleX(1.0362);transform-origin:0 0;">For extra layers only</div>
<div style="position:absolute;left:61px;top:495px;width:45px;height:23px;box-sizing:border-box;border:1px solid #adadad;background:#e1e1e1"></div>
<div style="position:absolute;left:66.5px;top:500.84px;font:normal 12px/12px 'Liberation Sans', sans-serif;color:#000;white-space:pre;transform:scaleX(0.8750);transform-origin:0 0;">Insert...</div>
<div style="position:absolute;left:109px;top:495px;width:44px;height:23px;box-sizing:border-box;border:1px solid #adadad;background:#e1e1e1"></div>
<div style="position:absolute;left:117.5px;top:500.84px;font:normal 12px/12px 'Liberation Sans', sans-serif;color:#000;white-space:pre;transform:scaleX(0.8750);transform-origin:0 0;">Edit...</div>
<div style="position:absolute;left:156px;top:495px;width:44px;height:23px;box-sizing:border-box;border:1px solid #adadad;background:#e1e1e1"></div>
<div style="position:absolute;left:162.5px;top:500.84px;font:normal 12px/12px 'Liberation Sans', sans-serif;color:#000;white-space:pre;transform:scaleX(0.8750);transform-origin:0 0;">Delete</div>
<svg style="position:absolute;left:0;top:0" width="2560" height="1440" viewBox="0 0 2560 1440">
<defs><pattern id="cu" width="3" height="3" patternUnits="userSpaceOnUse">
<rect width="3" height="3" fill="#c48d18"/><rect x="1" y="1" width="1" height="1" fill="#7c5f28"/></pattern></defs>
<circle cx="816" cy="794" r="168.42" fill="#2f4f4f" stroke="#000" stroke-width="1" shape-rendering="crispEdges"/>
<circle cx="815.5" cy="794" r="146.97" fill="#dcdcdc" stroke="#000" stroke-width="1" shape-rendering="crispEdges"/>
<circle cx="816" cy="794" r="126.52" fill="#696969" stroke="#000" stroke-width="1" shape-rendering="crispEdges"/>
<circle cx="816" cy="794" r="98.5" fill="#4682b4" stroke="#000" stroke-width="1" shape-rendering="crispEdges"/>
<circle cx="816.0" cy="741.0" r="45.35" fill="#b0e0e6" stroke="#000" stroke-width="1" shape-rendering="crispEdges"/>
<circle cx="816.0" cy="741.0" r="26.35" fill="#696969" stroke="#000" stroke-width="1" shape-rendering="crispEdges"/>
<circle cx="816.0" cy="741.0" r="15.35" fill="url(#cu)" stroke="#000" stroke-width="1" shape-rendering="crispEdges"/>
<circle cx="770.0" cy="820.0" r="45.35" fill="#b0e0e6" stroke="#000" stroke-width="1" shape-rendering="crispEdges"/>
<circle cx="770.0" cy="820.0" r="26.35" fill="#696969" stroke="#000" stroke-width="1" shape-rendering="crispEdges"/>
<circle cx="770.0" cy="820.0" r="15.35" fill="url(#cu)" stroke="#000" stroke-width="1" shape-rendering="crispEdges"/>
<circle cx="862.0" cy="820.0" r="45.35" fill="#b0e0e6" stroke="#000" stroke-width="1" shape-rendering="crispEdges"/>
<circle cx="862.0" cy="820.0" r="26.35" fill="#696969" stroke="#000" stroke-width="1" shape-rendering="crispEdges"/>
<circle cx="862.0" cy="820.0" r="15.35" fill="url(#cu)" stroke="#000" stroke-width="1" shape-rendering="crispEdges"/>
<path d="M816.5 741.5 V159.5 H989" fill="none" stroke="#000" stroke-width="1" shape-rendering="crispEdges"/>
<rect x="815" y="740" width="3" height="3" fill="#000" shape-rendering="crispEdges"/>
<circle cx="990" cy="159.5" r="1.8" fill="#000"/>
<path d="M837.5 741.5 V194.5 H989" fill="none" stroke="#000" stroke-width="1" shape-rendering="crispEdges"/>
<rect x="836" y="740" width="3" height="3" fill="#000" shape-rendering="crispEdges"/>
<circle cx="990" cy="194.5" r="1.8" fill="#000"/>
<path d="M852.5 741.5 V229.5 H989" fill="none" stroke="#000" stroke-width="1" shape-rendering="crispEdges"/>
<rect x="851" y="740" width="3" height="3" fill="#000" shape-rendering="crispEdges"/>
<circle cx="990" cy="229.5" r="1.8" fill="#000"/>
<path d="M898.5 748.5 V264.5 H989" fill="none" stroke="#000" stroke-width="1" shape-rendering="crispEdges"/>
<rect x="897" y="747" width="3" height="3" fill="#000" shape-rendering="crispEdges"/>
<circle cx="990" cy="264.5" r="1.8" fill="#000"/>
<path d="M929.5 794.5 V299.5 H989" fill="none" stroke="#000" stroke-width="1" shape-rendering="crispEdges"/>
<rect x="928" y="793" width="3" height="3" fill="#000" shape-rendering="crispEdges"/>
<circle cx="990" cy="299.5" r="1.8" fill="#000"/>
<path d="M953.5 794.5 V334.5 H989" fill="none" stroke="#000" stroke-width="1" shape-rendering="crispEdges"/>
<rect x="952" y="793" width="3" height="3" fill="#000" shape-rendering="crispEdges"/>
<circle cx="990" cy="334.5" r="1.8" fill="#000"/>
<path d="M974.5 794.5 V369.5 H989" fill="none" stroke="#000" stroke-width="1" shape-rendering="crispEdges"/>
<rect x="973" y="793" width="3" height="3" fill="#000" shape-rendering="crispEdges"/>
<circle cx="990" cy="369.5" r="1.8" fill="#000"/>
<circle cx="990" cy="404.5" r="1.8" fill="#000"/>
<circle cx="990" cy="425.5" r="1.8" fill="#000"/>
</svg>
<div style="position:absolute;left:1000px;top:154.29px;font:bold 11px/11px 'Liberation Sans', sans-serif;color:#000;white-space:pre;transform:scaleX(1.0708);transform-origin:0 0;">Conductor, copper, compressed</div>
<div style="position:absolute;left:1000px;top:170.29px;font:bold 11px/11px 'Liberation Sans', sans-serif;color:#000;white-space:pre;transform:scaleX(0.9722);transform-origin:0 0;"><u style="color:#0000ff">D</u>=0.81102 inch</div>
<div style="position:absolute;left:1000px;top:189.29px;font:bold 11px/11px 'Liberation Sans', sans-serif;color:#000;white-space:pre;transform:scaleX(1.0503);transform-origin:0 0;">Conductor shield</div>
<div style="position:absolute;left:1000px;top:205.29px;font:bold 11px/11px 'Liberation Sans', sans-serif;color:#000;white-space:pre;transform:scaleX(0.9787);transform-origin:0 0;"><u style="color:#0000ff">Th</u>=0.025, <u style="color:#0000ff">D</u>=0.86102 inch</div>
<div style="position:absolute;left:1000px;top:224.29px;font:bold 11px/11px 'Liberation Sans', sans-serif;color:#000;white-space:pre;transform:scaleX(1.0199);transform-origin:0 0;">Insulation, XLPE (unfilled)</div>
<div style="position:absolute;left:1000px;top:240.29px;font:bold 11px/11px 'Liberation Sans', sans-serif;color:#000;white-space:pre;"><u style="color:#0000ff">Th</u>=0.51181 inch</div>
<div style="position:absolute;left:1000px;top:259.29px;font:bold 11px/11px 'Liberation Sans', sans-serif;color:#000;white-space:pre;transform:scaleX(1.0422);transform-origin:0 0;">Fillers, Same as insulation</div>
<div style="position:absolute;left:1000px;top:275.29px;font:bold 11px/11px 'Liberation Sans', sans-serif;color:#000;white-space:pre;transform:scaleX(0.9648);transform-origin:0 0;"><u style="color:#0000ff">D</u>=4.06085 inch</div>
<div style="position:absolute;left:1000px;top:294.29px;font:bold 11px/11px 'Liberation Sans', sans-serif;color:#000;white-space:pre;transform:scaleX(1.0357);transform-origin:0 0;">Insu. screen,&nbsp; XLPE (unfilled)</div>
<div style="position:absolute;left:1000px;top:310.29px;font:bold 11px/11px 'Liberation Sans', sans-serif;color:#000;white-space:pre;transform:scaleX(0.9830);transform-origin:0 0;"><u style="color:#0000ff">Th</u>=0.51181, <u style="color:#0000ff">D</u>=5.08447 inch</div>
<div style="position:absolute;left:1000px;top:329.29px;font:bold 11px/11px 'Liberation Sans', sans-serif;color:#000;white-space:pre;transform:scaleX(1.0340);transform-origin:0 0;">Sheath, lead</div>
<div style="position:absolute;left:1000px;top:345.29px;font:bold 11px/11px 'Liberation Sans', sans-serif;color:#000;white-space:pre;transform:scaleX(0.9830);transform-origin:0 0;"><u style="color:#0000ff">Th</u>=0.18982, <u style="color:#0000ff">D</u>=5.46411 inch</div>
<div style="position:absolute;left:1000px;top:364.29px;font:bold 11px/11px 'Liberation Sans', sans-serif;color:#000;white-space:pre;transform:scaleX(1.0241);transform-origin:0 0;">Jacket, PVC</div>
<div style="position:absolute;left:1000px;top:380.29px;font:bold 11px/11px 'Liberation Sans', sans-serif;color:#000;white-space:pre;transform:scaleX(0.9789);transform-origin:0 0;"><u style="color:#0000ff">Th</u>=0.09843, <u style="color:#0000ff">D</u>=5.66096 inch</div>
<div style="position:absolute;left:1000px;top:399.29px;font:bold 11px/11px 'Liberation Sans', sans-serif;color:#000;white-space:pre;transform:scaleX(1.0224);transform-origin:0 0;"><u style="color:#0000ff">Overall cable diameter</u>=5.66096 inch</div>
<div style="position:absolute;left:1000px;top:420.09px;font:bold 11px/11px 'Liberation Sans', sans-serif;color:#000;white-space:pre;transform:scaleX(0.9788);transform-origin:0 0;">r=1.0881, R=1.88465 inch</div>
<svg style="position:absolute;left:0;top:0" width="2560" height="1440" viewBox="0 0 2560 1440">
<defs>
<linearGradient id="jk" x1="0" x2="1" y1="0" y2="0">
<stop offset="0" stop-color="#55584f"/><stop offset="0.22" stop-color="#5a5d54"/><stop offset="0.36" stop-color="#45463f"/><stop offset="1" stop-color="#3d3d37"/></linearGradient>
<linearGradient id="sv" x1="0" x2="1" y1="0" y2="0">
<stop offset="0" stop-color="#a8a8aa"/><stop offset="0.35" stop-color="#b4b4b6"/><stop offset="0.75" stop-color="#c4c4c6"/><stop offset="1" stop-color="#aaaaac"/></linearGradient>
<linearGradient id="cp" x1="0" x2="1" y1="0" y2="0">
<stop offset="0" stop-color="#b87050"/><stop offset="0.3" stop-color="#e8b898"/><stop offset="0.55" stop-color="#f4d0b0"/><stop offset="0.8" stop-color="#c88060"/><stop offset="1" stop-color="#a06040"/></linearGradient>
</defs>
<rect x="2032.5" y="1209" width="169" height="118" fill="url(#jk)"/>
<ellipse cx="2117.0" cy="1209" rx="84.5" ry="24.5" fill="#000"/>
<path d="M2044 1140 V1206.6 A73 24 0 0 0 2190 1206.6 V1140 Z" fill="url(#sv)"/>
<path d="M2044.5 1206.6 A72.5 24 0 0 0 2189.5 1206.6" fill="none" stroke="#f4f4f4" stroke-width="1.2"/>
<path d="M2062 1206 A63 20 0 0 1 2190 1206" fill="none" stroke="#fff" stroke-width="0.8" stroke-dasharray="1.5 2.5" opacity="0.9"/>
<ellipse cx="2117.0" cy="1140" rx="73" ry="21.5" fill="#000"/>
<path d="M2053.4 1076 V1136 A63.6 22 0 0 0 2180.7 1136 V1076 Z" fill="url(#jk)"/>
<path d="M2072 1119 A58 16 0 0 1 2178 1130" fill="none" stroke="#8a8a84" stroke-width="0.8" stroke-dasharray="1.5 2.5"/>
<ellipse cx="2117.0" cy="1076" rx="63.7" ry="18.5" fill="#000"/>
<path d="M2070.7 1040 V1074 C2075 1080 2090 1082 2105 1079 C2112 1077 2122 1077 2129 1079 C2144 1082 2160 1080 2163.8 1074 V1040 Z" fill="#b0e0e6"/>
<path d="M2070.7 1040 C2072 1034 2085 1033 2095 1036 C2105 1039 2130 1039 2140 1036 C2150 1033 2163 1034 2163.8 1040 C2160 1046 2145 1047 2130 1044 C2122 1042 2112 1042 2104 1044 C2090 1047 2074 1046 2070.7 1040 Z" fill="#000"/>
<path d="M2079.4 1013.5 V1039.5 A13.149999999999864 5.5 0 0 0 2105.7 1039.5 V1013.5 Z" fill="#3e3e3a" stroke="#6a6a66" stroke-width="0.7"/>
<ellipse cx="2092.55" cy="1013.5" rx="13.149999999999864" ry="5" fill="#000"/>
<path d="M2105.0 1010.5 V1036.5 A12.75 5.5 0 0 0 2130.5 1036.5 V1010.5 Z" fill="#3e3e3a" stroke="#6a6a66" stroke-width="0.7"/>
<ellipse cx="2117.75" cy="1010.5" rx="12.75" ry="5" fill="#000"/>
<path d="M2129.5 1013.5 V1039.5 A12.650000000000091 5.5 0 0 0 2154.8 1039.5 V1013.5 Z" fill="#3e3e3a" stroke="#6a6a66" stroke-width="0.7"/>
<ellipse cx="2142.15" cy="1013.5" rx="12.650000000000091" ry="5" fill="#000"/>
<rect x="2085.8" y="980.2" width="15.0" height="34.5" fill="url(#cp)" stroke="#d49a20" stroke-width="1"/>
<path d="M2089.8 985.2 L2092.8 1012.7 M2094.8 985.2 L2097.8 1012.7" stroke="#9a5a38" stroke-width="0.9"/>
<rect x="2085.3" y="979.7" width="16.0" height="3.5" fill="#d09a20"/>
<rect x="2085.8" y="1012.2" width="15.0" height="2.5" fill="#d09a20"/>
<rect x="2109.6" y="977.3" width="15.0" height="34.5" fill="url(#cp)" stroke="#d49a20" stroke-width="1"/>
<path d="M2113.6 982.3 L2116.6 1009.8 M2118.6 982.3 L2121.6 1009.8" stroke="#9a5a38" stroke-width="0.9"/>
<rect x="2109.1" y="976.8" width="16.0" height="3.5" fill="#d09a20"/>
<rect x="2109.6" y="1009.3" width="15.0" height="2.5" fill="#d09a20"/>
<rect x="2133.9" y="980.2" width="15.0" height="34.5" fill="url(#cp)" stroke="#d49a20" stroke-width="1"/>
<path d="M2137.9 985.2 L2140.9 1012.7 M2142.9 985.2 L2145.9 1012.7" stroke="#9a5a38" stroke-width="0.9"/>
<rect x="2133.4" y="979.7" width="16.0" height="3.5" fill="#d09a20"/>
<rect x="2133.9" y="1012.2" width="15.0" height="2.5" fill="#d09a20"/>
</svg>
<div style="position:absolute;left:57.5px;top:1332.09px;font:bold 11px/11px 'Liberation Sans', sans-serif;color:#000;white-space:pre;transform:scaleX(1.0233);transform-origin:0 0;"><span style="color:#0000ff;text-decoration:underline">Voltage</span> = 13.8 kV &nbsp;&nbsp;<span style="color:#0000ff;text-decoration:underline">Cond. area</span> = 0.465 inch² &nbsp;(592 kcmil)</div>
</body></html>
